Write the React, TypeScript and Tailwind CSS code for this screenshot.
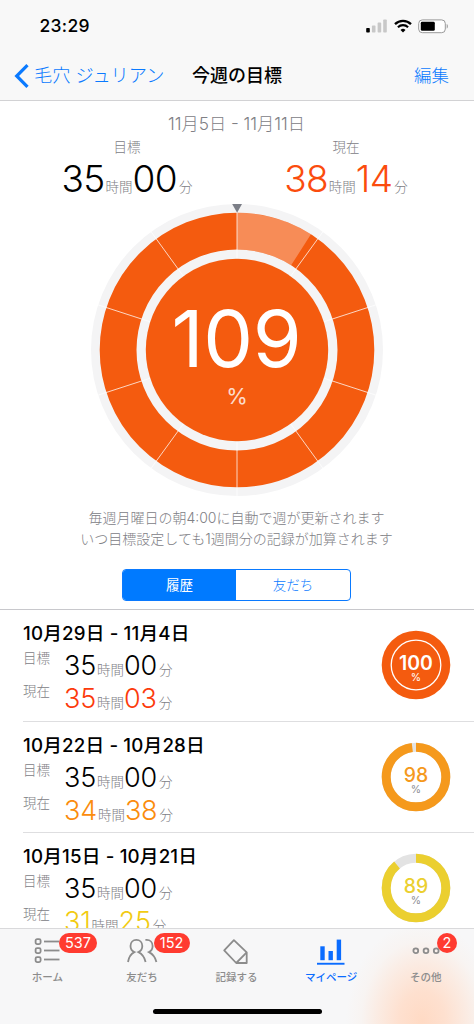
import React from 'react';
import clsx from 'clsx';

interface DurationProps {
  hours: string;
  minutes: string;
  large?: boolean;
  className?: string;
}

interface WeekRecord {
  range: string;
  hours: string;
  minutes: string;
  percent: number;
  color: string;
  textClass: string;
}

interface TabItem {
  label: string;
  badge?: string;
  badgeClass?: string;
  active?: boolean;
  icon: React.ReactNode;
}

const WEEKS: WeekRecord[] = [
  { range: '10月29日 - 11月4日', hours: '35', minutes: '03', percent: 100, color: '#f45b0f', textClass: 'text-[#fc3a0b]' },
  { range: '10月22日 - 10月28日', hours: '34', minutes: '38', percent: 98, color: '#f5991c', textClass: 'text-[#fb8c0d]' },
  { range: '10月15日 - 10月21日', hours: '31', minutes: '25', percent: 89, color: '#ebcf2f', textClass: 'text-[#f2cb12]' },
];

// Point on a circle, with the angle running clockwise from 12 o'clock
function polar(center: number, radius: number, fraction: number) {
  const a = fraction * Math.PI * 2;
  return [center + radius * Math.sin(a), center - radius * Math.cos(a)];
}

function Duration({ hours, minutes, large, className }: DurationProps) {
  const digits = clsx(
    large ? 'text-[37px] font-light tracking-[-0.7px]' : 'text-[27px] font-light tracking-[-0.2px]',
    className,
  );
  return (
    <div className="flex items-baseline whitespace-nowrap leading-none text-[#808085]">
      <span className={digits}>{hours}</span>
      <span className="ml-[1px] text-[13.5px] font-light">時間</span>
      <span className={digits}>{minutes}</span>
      <span className="ml-[2px] text-[13.5px] font-light">分</span>
    </div>
  );
}

function StatusBar() {
  return (
    <div className="flex h-[51px] items-center justify-between pt-[1px] pl-[39.5px] pr-[25px]">
      <span className="text-[17.5px] font-medium leading-none tracking-[0.3px]">23:29</span>
      <div className="flex items-center gap-[6px]">
        <svg width="22" height="14" viewBox="0 0 22 14">
          <rect x="0.2" y="9" width="3.6" height="4.5" rx="0.8" fill="#000" />
          <rect x="5.9" y="6.6" width="3.6" height="6.9" rx="0.8" fill="#c8c8c8" />
          <rect x="11.6" y="3.6" width="3.6" height="9.9" rx="0.8" fill="#c8c8c8" />
          <rect x="17.2" y="0.5" width="3.6" height="13" rx="0.8" fill="#c8c8c8" />
        </svg>
        <svg width="18" height="14" viewBox="0 0 18 14" fill="none" stroke="#000">
          <path d="M1 5.1a11.5 11.5 0 0 1 16 0" strokeWidth="2.3" />
          <path d="M3.9 8.2a7.4 7.4 0 0 1 10.2 0" strokeWidth="2.1" />
          <path d="M9 13.5 6.5 11a3.6 3.6 0 0 1 5 0z" fill="#000" stroke="none" />
        </svg>
        <svg width="31" height="15" viewBox="0 0 31 15">
          <rect x="0.7" y="0.9" width="26.6" height="12.8" rx="3.6" fill="#fff" stroke="#999" />
          <rect x="2.8" y="2.8" width="14" height="9" rx="1.4" fill="#000" />
          <path d="M28.7 5v4.6c1.6-.6 1.6-4 0-4.6z" fill="#999" />
        </svg>
      </div>
    </div>
  );
}

function GoalRing() {
  const c = 146;
  const [ox, oy] = polar(c, 137.3, 0.0905);
  const [ix, iy] = polar(c, 100.5, 0.0905);
  return (
    <svg width="292" height="292" viewBox="0 0 292 292" className="block">
      <circle cx={c} cy={c} r="146" fill="#f4f4f5" />
      <circle cx={c} cy={c} r="118.9" fill="none" stroke="#f45b0f" strokeWidth="36.8" />
      <circle cx={c} cy={c} r="91.2" fill="#f45b0f" />
      <path
        d={`M146 8.7A137.3 137.3 0 0 1 ${ox} ${oy}L${ix} ${iy}A100.5 100.5 0 0 0 146 45.5Z`}
        fill="#fff"
        fillOpacity="0.3"
      />
      {Array.from({ length: 10 }, (_, i) => {
        const [x1, y1] = polar(c, 91.5, i / 10);
        const [x2, y2] = polar(c, 146, i / 10);
        return <line key={i} x1={x1} y1={y1} x2={x2} y2={y2} stroke="#fff" strokeOpacity="0.75" />;
      })}
      <path d="M141.2 0h9.8l-4.9 8.8z" fill="#7b7e87" />
      <text x="145.5" y="163" textAnchor="middle" fill="#fff" fontSize="79" letterSpacing="-0.4" className="font-normal">
        109
      </text>
      <text x="146" y="199.5" textAnchor="middle" fill="#fff" fillOpacity="0.8" fontSize="22">
        %
      </text>
    </svg>
  );
}

function MiniRing({ percent, color }: { percent: number; color: string }) {
  const full = percent >= 100;
  return (
    <svg width="70" height="70" viewBox="0 0 70 70">
      {full ? (
        <>
          <circle cx="35" cy="35" r="34.3" fill={color} />
          <circle cx="35" cy="35" r="24.8" fill="none" stroke="#fff" strokeWidth="1.3" />
        </>
      ) : (
        <>
          <circle cx="35" cy="35" r="29.8" fill="none" stroke="#e3e3e3" strokeWidth="9" />
          <circle
            cx="35"
            cy="35"
            r="29.8"
            fill="none"
            stroke={color}
            strokeWidth="9"
            pathLength="100"
            strokeDasharray={`${percent} 100`}
            transform="rotate(-90 35 35)"
          />
        </>
      )}
      <text
        x="35"
        y="39.8"
        textAnchor="middle"
        fill={full ? '#fff' : color}
        fontSize="19.4"
        className={full ? 'font-semibold' : 'font-medium'}
      >
        {percent}
      </text>
      <text x="35" y="51.3" textAnchor="middle" fill={full ? '#fff' : '#8e8e93'} fontSize="10.5">
        %
      </text>
    </svg>
  );
}

function WeekRow({ week, first }: { week: WeekRecord; first: boolean }) {
  return (
    <div className="h-[111px] shrink-0 pl-[23px]">
      <div className={clsx('flex h-full justify-between pr-[23px]', !first && 'border-t border-[#dedee0]')}>
        <div>
          <div className="mt-[14px] h-[20px] whitespace-nowrap text-[18.7px] font-medium leading-[20px] tracking-[0.17px] text-black">
            {week.range}
          </div>
          <div className="mt-[3px] flex h-[33px]">
            <span className="w-[41px] pt-[4px] text-[13.5px] font-light leading-[14px] text-[#808085]">目標</span>
            <div className="pt-[5px]">
              <Duration hours="35" minutes="00" className="text-black" />
            </div>
          </div>
          <div className="flex h-[33px]">
            <span className="w-[41px] pt-[4px] text-[13.5px] font-light leading-[14px] text-[#808085]">現在</span>
            <div className="pt-[5px]">
              <Duration hours={week.hours} minutes={week.minutes} className={week.textClass} />
            </div>
          </div>
        </div>
        <div className="pt-[20px]">
          <MiniRing percent={week.percent} color={week.color} />
        </div>
      </div>
    </div>
  );
}

const TABS: TabItem[] = [
  {
    label: 'ホーム',
    badge: '537',
    badgeClass: 'left-[58.5px] w-[38px]',
    icon: (
      <>
        {[3.5, 12.5, 21.5].map((y) => (
          <g key={y}>
            <rect x="3.6" y={y - 2.4} width="5" height="5" rx="1.5" />
            <path d={`M12 ${y}h15.5`} />
          </g>
        ))}
      </>
    ),
  },
  {
    label: '友だち',
    badge: '152',
    badgeClass: 'left-[58.5px] w-[36px]',
    icon: (
      <>
        <path d="M1 24c.7-4.500 2.600-8 6.300-9.900C4.800 13 3.500 10.800 3.500 8.100c0-3.600 2.500-6.200 5.900-6.200s5.900 2.600 5.900 6.200c0 2.700-1.300 4.900-3.800 6C15.200 16 17.600 19.500 18.600 24" />
        <path d="M18.400 1.900h1.300c3.400 0 5.900 2.600 5.900 6.200 0 2.700-1.100 4.900-3.600 6C25.700 16 28.400 19.500 29.400 24" />
      </>
    ),
  },
  {
    label: '記録する',
    icon: (
      <g strokeLinejoin="round">
        <path d="M3.200 12.300 12.900 2.100 25.700 14.300V25H15.200z" />
        <path d="m15.200 25 10.500-10.700" />
      </g>
    ),
  },
  {
    label: 'マイページ',
    active: true,
    icon: (
      <g fill="currentColor" stroke="none">
        <rect x="4.3" y="8.3" width="4.4" height="13.9" />
        <rect x="12.5" y="13" width="4.4" height="9.2" />
        <rect x="20.7" y="1.6" width="4.4" height="20.6" />
        <rect x="1" y="24.8" width="27.5" height="1.9" />
      </g>
    ),
  },
  {
    label: 'その他',
    badge: '2',
    badgeClass: 'left-[58px] w-[20px]',
    icon: (
      <>
        <circle cx="4.8" cy="12.7" r="2.4" />
        <circle cx="15" cy="12.7" r="2.4" />
        <circle cx="25.2" cy="12.7" r="2.4" />
      </>
    ),
  },
];

function TabBar() {
  return (
    <nav className="flex h-[96px] shrink-0 flex-col border-t border-[#d9d9db] bg-[#f7f7f8] bg-[radial-gradient(ellipse_76px_100px_at_422px_92px,#ffdac4_0%,#fee0cf_30%,#fbebe2_58%,#f8f4f2_80%,#f7f7f8_100%)]">
      <div className="flex h-[76px] px-[0.5px]">
        {TABS.map((tab) => (
          <div
            key={tab.label}
            className={clsx(
              'relative flex w-[94.6px] flex-col items-center pt-[9px]',
              tab.active ? 'text-[#0a6cff]' : 'text-[#8c8c8c]',
            )}
          >
            <svg width="31" height="27" viewBox="0 0 31 27" fill="none" stroke="currentColor" strokeWidth="1.8">
              {tab.icon}
            </svg>
            <span className="mt-[6px] mr-[1px] whitespace-nowrap text-[10.5px] font-medium leading-[14px]">{tab.label}</span>
            {tab.badge && (
              <span
                className={clsx(
                  'absolute top-[4px] flex h-[20px] items-center justify-center rounded-full bg-[#ff3b30] text-[14.5px] leading-none text-white',
                  tab.badgeClass,
                )}
              >
                {tab.badge}
              </span>
            )}
          </div>
        ))}
      </div>
      <div className="mt-[4px] h-[5px] w-[169px] self-center rounded-full bg-black" />
    </nav>
  );
}

export default function App() {
  return (
    <div className="flex h-[1024px] w-[474px] flex-col overflow-hidden bg-white font-['Inter','Noto_Sans_CJK_JP',sans-serif] text-black">
      <header className="h-[101px] shrink-0 border-b border-[#d2d2d4] bg-[#f8f8f8]">
        <StatusBar />
        <div className="grid h-[49px] grid-cols-[1fr_auto_1fr] items-center px-[14px] text-[18.2px] leading-none">
          <div className="flex items-center text-[#0a7aff]">
            <svg width="15" height="24" viewBox="0 0 15 24" fill="none" stroke="currentColor" strokeWidth="3.2" className="mr-[5px]">
              <path d="M13.5 1.2 2.7 12l10.8 10.8" />
            </svg>
            <span className="whitespace-nowrap font-light">毛穴 ジュリアン</span>
          </div>
          <h1 className="text-[18px] font-medium">今週の目標</h1>
          <span className="mr-[11px] justify-self-end text-[17.5px] font-light text-[#0a7aff]">編集</span>
        </div>
      </header>

      <section className="flex h-[508px] shrink-0 flex-col items-center">
        <div className="mt-[14px] mr-[1px] text-[17.2px] font-light leading-[18px] text-[#808085]">11月5日 - 11月11日</div>
        <div className="mt-[7px] flex w-full justify-between pl-[61px] pr-[65px]">
          <div className="flex w-[132px] flex-col items-center">
            <span className="text-[13.5px] font-light leading-[14px] text-[#808085]">目標</span>
            <div className="mt-[6px]">
              <Duration large hours="35" minutes="00" className="text-black" />
            </div>
          </div>
          <div className="flex w-[126px] flex-col items-center">
            <span className="text-[13.5px] font-light leading-[14px] text-[#808085]">現在</span>
            <div className="mt-[6px]">
              <Duration large hours="38" minutes="14" className="text-[#fb4c0d]" />
            </div>
          </div>
        </div>
        <div className="mt-[7px] mr-[1px]">
          <GoalRing />
        </div>
        <p className="mt-[12px] mr-[1px] text-center text-[14px] font-light leading-[20.5px] text-[#808085]">
          毎週月曜日の朝4:00に自動で週が更新されます
          <br />
          いつ目標設定しても1週間分の記録が加算されます
        </p>
        <div className="mt-[20px] mr-[1px] flex h-[32px] w-[229px] overflow-hidden rounded-[4px] border border-[#0a7aff] text-[13.5px]">
          <button className="w-[113px] bg-[#007aff] text-white">履歴</button>
          <button className="flex-1 font-light text-[#0a7aff]">友だち</button>
        </div>
      </section>

      <main className="min-h-0 flex-1 overflow-hidden border-t border-[#c8c8cc]">
        {WEEKS.map((week, i) => (
          <WeekRow key={week.range} week={week} first={i === 0} />
        ))}
      </main>
      <TabBar />
    </div>
  );
}
